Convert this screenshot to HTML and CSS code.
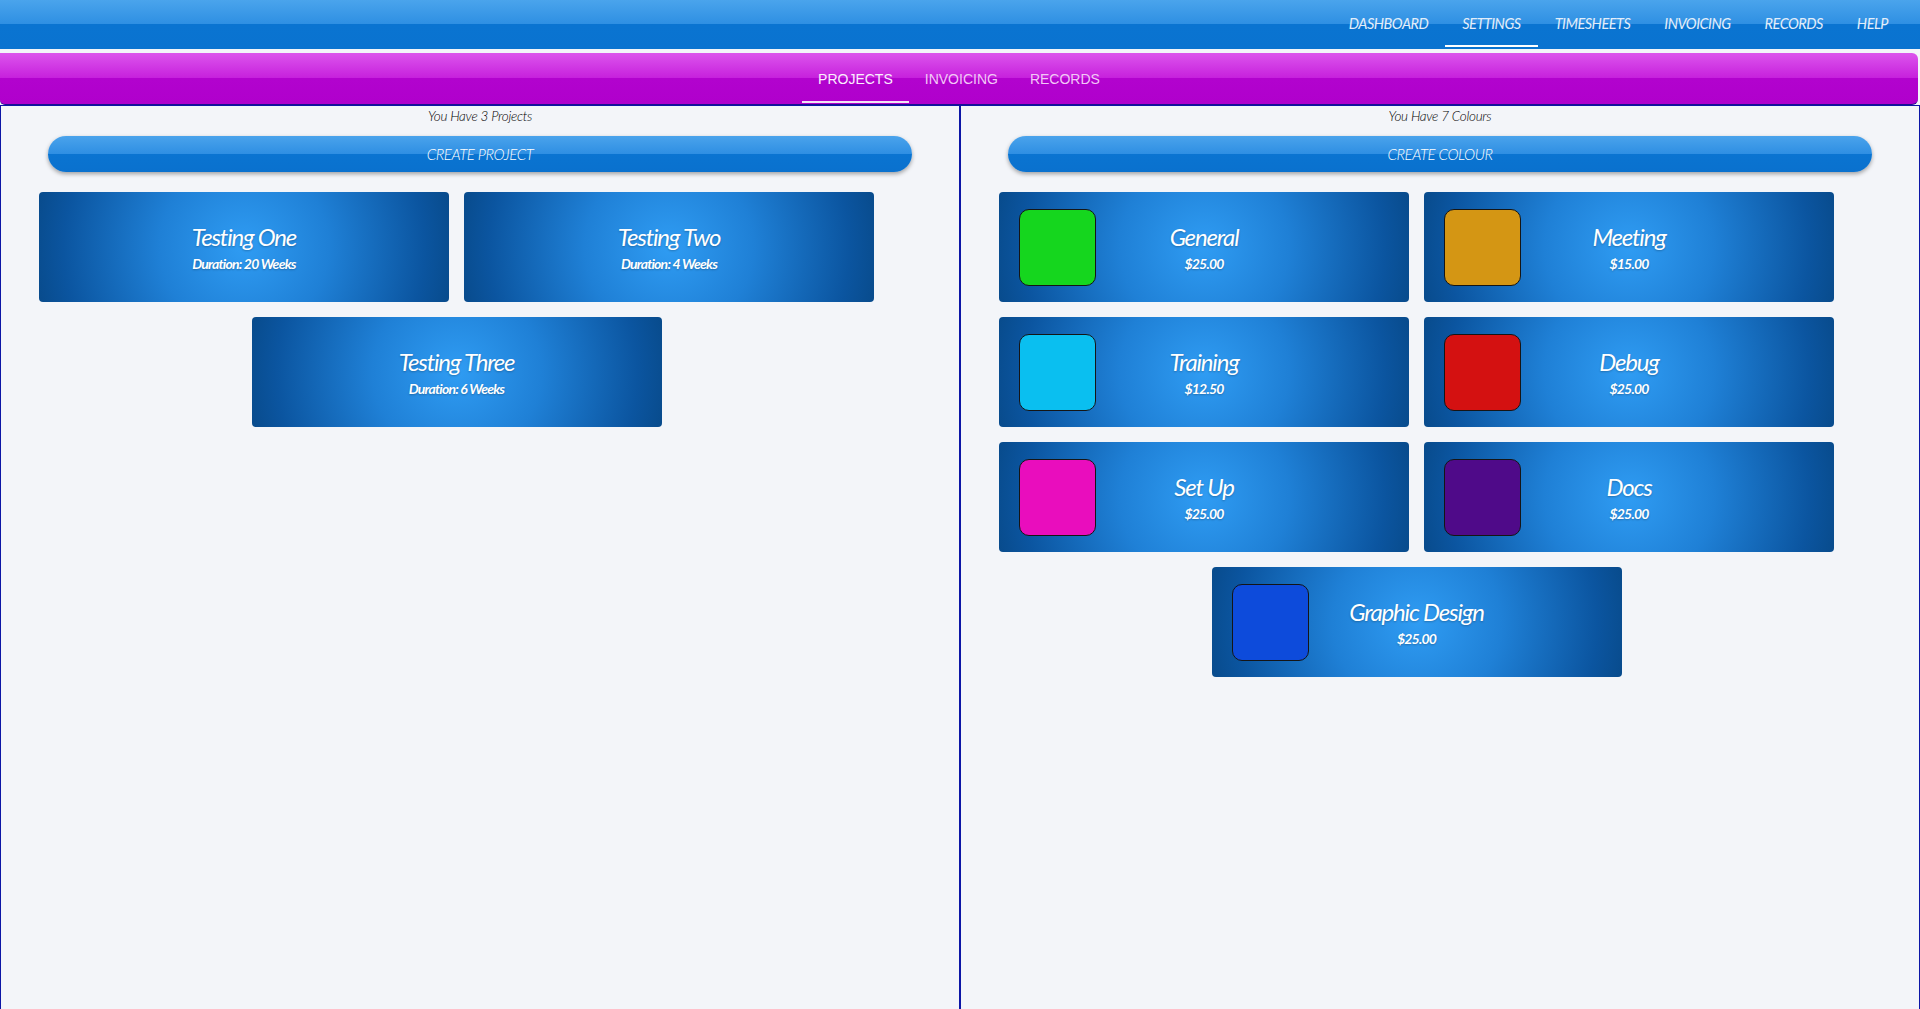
FILE: index.html
```html
<!DOCTYPE html>
<html lang="en">
<head>
<meta charset="utf-8">
<title>Settings - Projects</title>
<link rel="stylesheet" href="styles.css">
</head>
<body>
<header class="topbar">
  <nav class="topnav">
    <a class="topnav-item">DASHBOARD</a>
    <a class="topnav-item active">SETTINGS</a>
    <a class="topnav-item">TIMESHEETS</a>
    <a class="topnav-item">INVOICING</a>
    <a class="topnav-item">RECORDS</a>
    <a class="topnav-item">HELP</a>
  </nav>
</header>
<div class="subbar">
  <nav class="subnav">
    <a class="subnav-item active">PROJECTS</a>
    <a class="subnav-item">INVOICING</a>
    <a class="subnav-item">RECORDS</a>
  </nav>
</div>
<main class="panels">
  <section class="panel">
    <p class="count">You Have 3 Projects</p>
    <button class="create-btn">CREATE PROJECT</button>
    <div class="cards">
      <div class="card">
        <div class="card-text">
          <div class="card-title">Testing One</div>
          <div class="card-sub">Duration: 20 Weeks</div>
        </div>
      </div>
      <div class="card">
        <div class="card-text">
          <div class="card-title">Testing Two</div>
          <div class="card-sub">Duration: 4 Weeks</div>
        </div>
      </div>
      <div class="card">
        <div class="card-text">
          <div class="card-title">Testing Three</div>
          <div class="card-sub">Duration: 6 Weeks</div>
        </div>
      </div>
    </div>
  </section>
  <section class="panel">
    <p class="count">You Have 7 Colours</p>
    <button class="create-btn">CREATE COLOUR</button>
    <div class="cards">
      <div class="card colour-card">
        <div class="swatch sw-green"></div>
        <div class="card-text">
          <div class="card-title">General</div>
          <div class="card-sub">$25.00</div>
        </div>
      </div>
      <div class="card colour-card">
        <div class="swatch sw-gold"></div>
        <div class="card-text">
          <div class="card-title">Meeting</div>
          <div class="card-sub">$15.00</div>
        </div>
      </div>
      <div class="card colour-card">
        <div class="swatch sw-cyan"></div>
        <div class="card-text">
          <div class="card-title">Training</div>
          <div class="card-sub">$12.50</div>
        </div>
      </div>
      <div class="card colour-card">
        <div class="swatch sw-red"></div>
        <div class="card-text">
          <div class="card-title">Debug</div>
          <div class="card-sub">$25.00</div>
        </div>
      </div>
      <div class="card colour-card">
        <div class="swatch sw-magenta"></div>
        <div class="card-text">
          <div class="card-title">Set Up</div>
          <div class="card-sub">$25.00</div>
        </div>
      </div>
      <div class="card colour-card">
        <div class="swatch sw-purple"></div>
        <div class="card-text">
          <div class="card-title">Docs</div>
          <div class="card-sub">$25.00</div>
        </div>
      </div>
      <div class="card colour-card">
        <div class="swatch sw-blue"></div>
        <div class="card-text">
          <div class="card-title">Graphic Design</div>
          <div class="card-sub">$25.00</div>
        </div>
      </div>
    </div>
  </section>
</main>
</body>
</html>
```
FILE: styles.css
```css
* { box-sizing: border-box; }
html, body { margin: 0; padding: 0; }
body {
  background: #f3f5f9;
  font-family: "Lato", "Open Sans", sans-serif;
  height: 1009px;
  overflow: hidden;
}

/* top bar */
.topbar {
  height: 49px;
  background: linear-gradient(to bottom, #4aa4ec 0%, #2f90e3 48%, #0a74d1 49%, #0a73d0 100%);
  display: flex;
  justify-content: flex-end;
  padding-right: 15px;
  padding-bottom: 2px;
}
.topnav { display: flex; }
.topnav-item {
  height: 47px;
  padding: 2px 17px 0;
  display: flex;
  align-items: center;
  color: #e3eefa;
  font-style: italic;
  font-weight: 400;
  font-size: 14.5px;
  letter-spacing: -0.5px;
  border-bottom: 2px solid transparent;
}
.topnav-item.active { border-bottom-color: #ffffff; }

/* sub bar */
.subbar {
  margin-top: 4px;
  height: 52px;
  background: linear-gradient(to bottom, #dc55ec 0%, #c722dd 48%, #b203ce 50%, #b000cc 100%);
  border-bottom: 1px solid #1a1090;
  border-radius: 0 6px 6px 5px;
  margin-right: 2px;
  display: flex;
  justify-content: center;
}
.subnav { display: flex; }
.subnav-item {
  height: 50px;
  padding: 3px 16px 0;
  display: flex;
  align-items: center;
  font-family: "Liberation Sans", Arial, sans-serif;
  font-size: 14px;
  color: #f2c8f6;
  border-bottom: 2px solid transparent;
}
.subnav-item.active { color: #fbeefd; border-bottom-color: #f2e2f6; }

/* panels */
.panels {
  display: grid;
  grid-template-columns: 960px 960px;
  height: 904px;
}
.panel {
  border: 1px solid #0c16a6;
  height: 906px;
  padding: 0 47px;
  display: flex;
  flex-direction: column;
}
.count {
  margin: 2px 0 0;
  height: 20px;
  line-height: 16px;
  text-align: center;
  font-size: 13.5px;
  font-style: italic;
  font-weight: 300;
  letter-spacing: -0.3px;
  color: #000000;
}
.create-btn {
  margin-top: 8px;
  height: 36px;
  width: 100%;
  border: none;
  border-radius: 18px;
  background: linear-gradient(to bottom, #4aa3ec 0%, #2f8fe3 49%, #0a74d1 50%, #0a71ce 100%);
  box-shadow: 0 2px 4px rgba(0, 0, 0, 0.35);
  color: #ffffff;
  font-family: "Lato", sans-serif;
  font-style: italic;
  font-weight: 300;
  font-size: 15px;
  letter-spacing: -0.4px;
  padding: 0;
}

.cards {
  margin: 20px 0 0 -9px;
  width: 835px;
  display: flex;
  flex-wrap: wrap;
  justify-content: center;
  gap: 15px 15px;
}
.card {
  width: 410px;
  height: 110px;
  border-radius: 4px;
  background: radial-gradient(circle at center, #2f9cf3 0%, #1f80d6 40%, #0b55a0 85%, #084b8c 100%);
  display: flex;
  align-items: center;
  justify-content: center;
}
.card-text {
  display: flex;
  flex-direction: column;
  align-items: center;
  gap: 4px;
  padding-top: 1px;
  color: #ffffff;
  text-shadow: 0 1px 2px rgba(0, 0, 0, 0.25);
}
.card-title {
  font-size: 24px;
  line-height: 28px;
  font-style: italic;
  font-weight: 400;
  letter-spacing: -1.2px;
}
.card-sub {
  font-size: 14px;
  line-height: 18px;
  font-style: italic;
  font-weight: 700;
  letter-spacing: -0.8px;
}

.colour-card {
  display: grid;
  grid-template-columns: 77px 1fr 77px;
  align-items: center;
  padding: 0 20px;
}
.colour-card .card-text { justify-self: center; }
.swatch {
  width: 77px;
  height: 77px;
  border: 1px solid #151515;
  border-radius: 10px;
}
.sw-green { background: #15d61e; }
.sw-gold { background: #d49614; }
.sw-cyan { background: #0abff0; }
.sw-red { background: #d41111; }
.sw-magenta { background: #e90dbd; }
.sw-purple { background: #4f0a89; }
.sw-blue { background: #0d4bdb; }
```
